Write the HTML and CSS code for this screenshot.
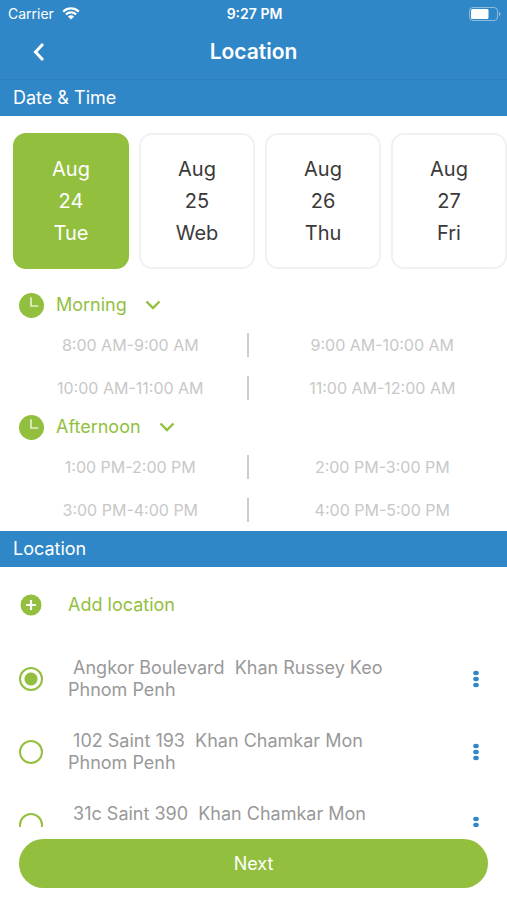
FILE: index.html
```html
<!DOCTYPE html>
<html lang="en">
<head>
<meta charset="utf-8">
<meta name="viewport" content="width=device-width, initial-scale=1">
<title>Location</title>
<link rel="stylesheet" href="styles.css">
</head>
<body>
<div class="app">
  <header class="top">
    <div class="status">
      <div class="status-left">
        <span>Carrier</span>
        <svg class="wifi" viewBox="0 0 18 13" aria-hidden="true"><path d="M1.2 4.6a11.2 11.2 0 0 1 15.6 0M3.9 7.5a7.3 7.3 0 0 1 10.2 0" fill="none" stroke="currentColor" stroke-width="2.2"/><path d="M9 12.6 5.9 9.5a4.4 4.4 0 0 1 6.2 0z" fill="currentColor"/></svg>
      </div>
      <span class="time">9:27 PM</span>
      <svg class="battery" viewBox="0 0 32 14" aria-hidden="true"><rect x=".5" y=".5" width="28" height="13" rx="3.5" fill="none" stroke="#fff" stroke-opacity=".45"/><rect x="2" y="2" width="17.5" height="10" rx="1.5" fill="#fff"/><path d="M30 4.8c2 .8 2 3.600 0 4.400z" fill="#fff" fill-opacity=".5"/></svg>
    </div>
    <nav class="nav">
      <button class="back" aria-label="Back"><svg viewBox="0 0 12 20" aria-hidden="true"><path d="M10 2 2.500 10 10 18" fill="none" stroke="currentColor" stroke-width="3"/></svg></button>
      <h1>Location</h1>
    </nav>
  </header>

  <h2 class="section">Date &amp; Time</h2>
  <div class="dates">
    <button class="date selected" aria-pressed="true"><span>Aug</span><span>24</span><span>Tue</span></button>
    <button class="date"><span>Aug</span><span>25</span><span>Web</span></button>
    <button class="date"><span>Aug</span><span>26</span><span>Thu</span></button>
    <button class="date"><span>Aug</span><span>27</span><span>Fri</span></button>
  </div>

  <div class="periods">
    <section>
      <button class="period">
        <svg class="clock" viewBox="0 0 24 24" aria-hidden="true"><circle cx="12" cy="12" r="12" fill="currentColor"/><path d="M11.500 4v8.500h7" fill="none" stroke="#e4f1cd" stroke-width="1.600"/></svg>
        <span>Morning</span>
        <svg class="chevron" viewBox="0 0 16 10" aria-hidden="true"><path d="M1.500 1.500 8 8l6.500-6.500" fill="none" stroke="currentColor" stroke-width="2.400"/></svg>
      </button>
      <div class="slots">
        <button class="slot">8:00 AM-9:00 AM</button><i class="divider"></i><button class="slot late">9:00 AM-10:00 AM</button>
        <button class="slot">10:00 AM-11:00 AM</button><i class="divider"></i><button class="slot late">11:00 AM-12:00 AM</button>
      </div>
    </section>
    <section>
      <button class="period">
        <svg class="clock" viewBox="0 0 24 24" aria-hidden="true"><circle cx="12" cy="12" r="12" fill="currentColor"/><path d="M11.500 4v8.500h7" fill="none" stroke="#e4f1cd" stroke-width="1.600"/></svg>
        <span>Afternoon</span>
        <svg class="chevron" viewBox="0 0 16 10" aria-hidden="true"><path d="M1.500 1.500 8 8l6.500-6.500" fill="none" stroke="currentColor" stroke-width="2.400"/></svg>
      </button>
      <div class="slots">
        <button class="slot">1:00 PM-2:00 PM</button><i class="divider"></i><button class="slot late">2:00 PM-3:00 PM</button>
        <button class="slot">3:00 PM-4:00 PM</button><i class="divider"></i><button class="slot late">4:00 PM-5:00 PM</button>
      </div>
    </section>
  </div>

  <h2 class="section">Location</h2>
  <main class="locations">
    <button class="add">
      <svg viewBox="0 0 24 24" aria-hidden="true"><circle cx="12" cy="12" r="10.500" fill="currentColor"/><path d="M12 7v10M7 12h10" stroke="#fff" stroke-width="2.200"/></svg>
      <span>Add location</span>
    </button>
    <div class="place">
      <input type="radio" name="place" id="place1" checked>
      <label for="place1">&nbsp;Angkor Boulevard&nbsp; Khan Russey Keo<br>Phnom Penh</label>
      <button class="more" aria-label="More options"><svg viewBox="0 0 6 18" aria-hidden="true"><ellipse cx="3" cy="3" rx="2.800" ry="2.200"/><ellipse cx="3" cy="9" rx="2.800" ry="2.200"/><ellipse cx="3" cy="15" rx="2.800" ry="2.200"/></svg></button>
    </div>
    <div class="place">
      <input type="radio" name="place" id="place2">
      <label for="place2">&nbsp;102 Saint 193&nbsp; Khan Chamkar Mon<br>Phnom Penh</label>
      <button class="more" aria-label="More options"><svg viewBox="0 0 6 18" aria-hidden="true"><ellipse cx="3" cy="3" rx="2.800" ry="2.200"/><ellipse cx="3" cy="9" rx="2.800" ry="2.200"/><ellipse cx="3" cy="15" rx="2.800" ry="2.200"/></svg></button>
    </div>
    <div class="place">
      <input type="radio" name="place" id="place3">
      <label for="place3">&nbsp;31c Saint 390&nbsp; Khan Chamkar Mon<br>&nbsp;</label>
      <button class="more" aria-label="More options"><svg viewBox="0 0 6 18" aria-hidden="true"><ellipse cx="3" cy="3" rx="2.800" ry="2.200"/><ellipse cx="3" cy="9" rx="2.800" ry="2.200"/><ellipse cx="3" cy="15" rx="2.800" ry="2.200"/></svg></button>
    </div>
  </main>
  <footer class="actions"><button class="next">Next</button></footer>
</div>
</body>
</html>
```
FILE: styles.css
```css
:root {
  --blue: #2f87c7;
  --green: #92bf3e;
}

* {
  box-sizing: border-box;
}

body {
  margin: 0;
  background: #fff;
  font-family: Inter, "Liberation Sans", sans-serif;
  font-size: 18px;
  line-height: 22px;
}

button {
  margin: 0;
  padding: 0;
  border: 0;
  background: none;
  color: inherit;
  font: inherit;
}

svg {
  display: block;
}

.app {
  display: flex;
  flex-direction: column;
  height: 100vh;
  overflow: hidden;
}

.app > * {
  flex: none;
}

.top {
  background: var(--blue);
  color: #fff;
  border-bottom: 1px solid #2b7fbe;
}

.status {
  display: grid;
  grid-template-columns: 1fr auto 1fr;
  align-items: center;
  height: 27px;
  padding: 0 6px 0 8px;
  font-size: 14px;
}

.status-left {
  display: flex;
  align-items: center;
  gap: 8px;
}

.wifi {
  width: 18px;
  height: 13px;
}

.time {
  font-weight: 600;
}

.battery {
  width: 32px;
  height: 14px;
  justify-self: end;
}

.nav {
  display: grid;
  grid-template-columns: 78px 1fr 78px;
  align-items: center;
  height: 52px;
  padding-bottom: 2px;
}

.back {
  display: flex;
  justify-content: center;
}

.back svg {
  width: 12px;
  height: 20px;
}

.nav h1 {
  margin: 0;
  text-align: center;
  font-size: 21px;
  font-weight: 600;
}

.section {
  margin: 0;
  padding: 7px 13px;
  background: var(--blue);
  color: #fff;
  font-size: 18px;
  font-weight: 400;
}

.dates {
  display: flex;
  gap: 10px;
  padding: 17px 13px 0;
  overflow: hidden;
}

.date {
  display: flex;
  flex: none;
  flex-direction: column;
  justify-content: center;
  width: 116px;
  height: 136px;
  border: 2px solid #f1f1f1;
  border-radius: 13px;
  color: #3a3a3a;
  font-size: 20px;
  line-height: 32px;
}

.date span {
  align-self: center;
}

.date.selected {
  border-color: var(--green);
  background: var(--green);
  color: #fff;
}

.periods {
  padding: 18px 0 0;
}

.period {
  display: flex;
  align-items: center;
  height: 36px;
  padding-left: 19px;
  color: var(--green);
}

.clock {
  width: 25px;
  height: 25px;
  margin-right: 12px;
}

.chevron {
  width: 16px;
  height: 10px;
  margin-left: 18px;
}

.slots {
  display: grid;
  grid-template-columns: 9fr 2px 10fr;
  align-items: center;
  padding-left: 14px;
}

.slot {
  height: 43px;
  color: #c8c8c8;
  font-size: 16px;
}

.slot.late {
  padding-left: 9px;
}

.divider {
  height: 24px;
  background: #ccc;
}

.app > .locations {
  flex: 1;
  min-height: 0;
  overflow: hidden;
}

.add {
  display: flex;
  align-items: center;
  gap: 25px;
  height: 75px;
  padding-left: 19px;
  color: var(--green);
}

.add svg {
  width: 24px;
  height: 24px;
}

.place {
  display: flex;
  align-items: center;
  gap: 25px;
  height: 73px;
  padding: 0 28px 0 19px;
  color: #999;
}

.place input {
  appearance: none;
  flex: none;
  width: 24px;
  height: 24px;
  margin: 0;
  border: 2px solid var(--green);
  border-radius: 50%;
}

.place input:checked {
  background: radial-gradient(circle, var(--green) 6px, transparent 7px);
}

.place label {
  flex: 1;
}

.more {
  fill: var(--blue);
}

.more svg {
  width: 6px;
  height: 18px;
}

.actions {
  padding: 12px 19px;
}

.next {
  width: 100%;
  height: 49px;
  border-radius: 25px;
  background: var(--green);
  color: #fff;
}
```
